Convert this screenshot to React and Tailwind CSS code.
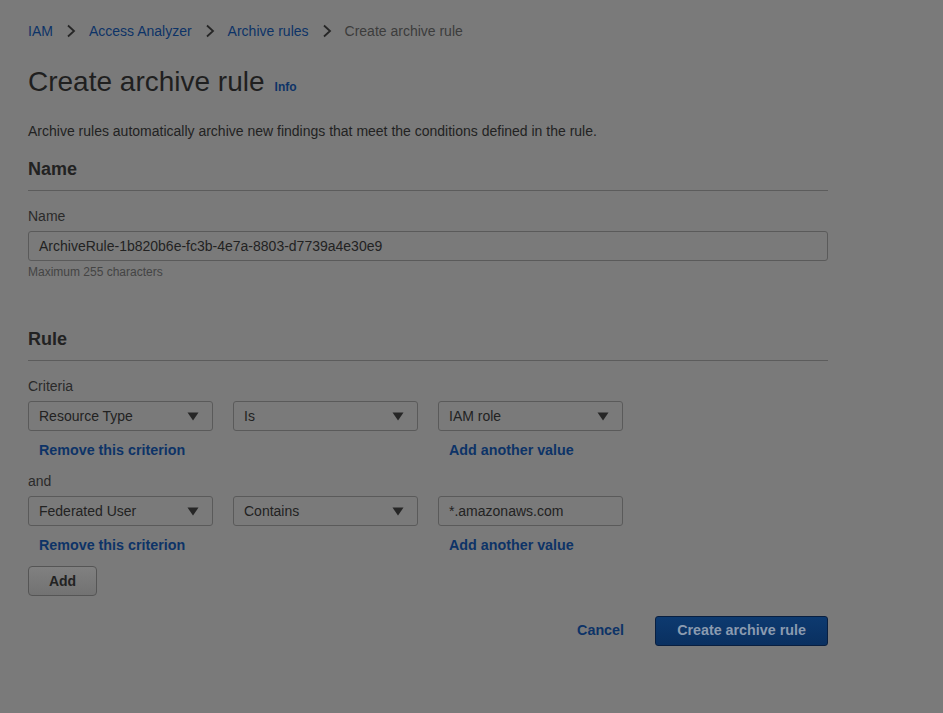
import React from "react";

const font = { fontFamily: '"Liberation Sans", Arial, sans-serif' };

function Chevron() {
  return (
    <svg width="10" height="14" viewBox="0 0 10 14" className="mx-[13px]">
      <path d="M2 1.5 L8 7 L2 12.5" fill="none" stroke="#262626" strokeWidth="1.8" />
    </svg>
  );
}

function Select({ value, arrow = true }) {
  return (
    <div className="w-[185px] h-[30px] border border-[#5a5a5a] rounded-[3px] flex items-center justify-between pl-[10px] pr-[13px] text-[14px] text-[#222]">
      <span>{value}</span>
      {arrow && (
        <svg width="12" height="9" viewBox="0 0 12 9">
          <path d="M0.5 0.5 L11.5 0.5 L6 8.5 Z" fill="#262626" />
        </svg>
      )}
    </div>
  );
}

function Criterion({ field, op, value, isInput }) {
  return (
    <div>
      <div className="flex gap-[20px]">
        <Select value={field} />
        <Select value={op} />
        <Select value={value} arrow={!isInput} />
      </div>
      <div className="flex h-[40px] items-center text-[14.3px] font-bold text-[#0d3367]">
        <span className="w-[410px] pl-[11px]">Remove this criterion</span>
        <span className="pl-[11px]">Add another value</span>
      </div>
    </div>
  );
}

export default function App() {
  return (
    <div className="min-h-screen w-full bg-[#7a7a7a] text-[#222]" style={font}>
      <div className="pl-[28px] pt-[22px] w-[828px]">
        <nav className="flex items-center text-[14px] h-[18px]">
          <span className="text-[#0d3367]">IAM</span>
          <Chevron />
          <span className="text-[#0d3367]">Access Analyzer</span>
          <Chevron />
          <span className="text-[#0d3367]">Archive rules</span>
          <Chevron />
          <span className="text-[#3c3c3c]">Create archive rule</span>
        </nav>

        <div className="flex items-baseline mt-[24px] h-[36px]">
          <h1 className="text-[28px] text-[#1f1f1f] leading-[36px]">Create archive rule</h1>
          <span className="ml-[10px] text-[12px] font-bold text-[#0d3367]">Info</span>
        </div>

        <p className="text-[14px] mt-[22px] leading-[18px]">
          Archive rules automatically archive new findings that meet the conditions defined in the rule.
        </p>

        <h2 className="text-[18px] font-bold mt-[17px] leading-[24px]">Name</h2>
        <div className="h-px bg-[#5c5c5c] mt-[9px]" />

        <div className="text-[14px] mt-[16px] leading-[18px] text-[#2a2a2a]">Name</div>
        <div className="mt-[6px] h-[30px] border border-[#5a5a5a] rounded-[3px] flex items-center pl-[10px] text-[14px]">
          ArchiveRule-1b820b6e-fc3b-4e7a-8803-d7739a4e30e9
        </div>
        <div className="text-[12px] text-[#444] mt-[4px] leading-[14px]">Maximum 255 characters</div>

        <h2 className="text-[18px] font-bold mt-[48px] leading-[24px]">Rule</h2>
        <div className="h-px bg-[#5c5c5c] mt-[9px]" />

        <div className="text-[14px] mt-[16px] leading-[18px] text-[#2a2a2a]">Criteria</div>
        <div className="mt-[6px]">
          <Criterion field="Resource Type" op="Is" value="IAM role" />
        </div>
        <div className="text-[14px] leading-[18px] text-[#2a2a2a] mt-[1px] mb-[6px]">and</div>
        <Criterion field="Federated User" op="Contains" value="*.amazonaws.com" isInput />

        <button className="w-[69px] h-[30px] border border-[#555] rounded-[4px] bg-gradient-to-b from-[#808080] to-[#727272] text-[14px] font-bold text-[#222]">
          Add
        </button>

        <div className="flex justify-end items-center mt-[20px] gap-[31px]">
          <span className="text-[14.3px] font-bold text-[#0d3367]">Cancel</span>
          <button className="w-[173px] h-[30px] rounded-[3px] border border-[#091f40] bg-gradient-to-b from-[#0d3a70] to-[#0a3060] text-[14.3px] font-bold text-[#8b9bb0]">
            Create archive rule
          </button>
        </div>
      </div>
    </div>
  );
}
